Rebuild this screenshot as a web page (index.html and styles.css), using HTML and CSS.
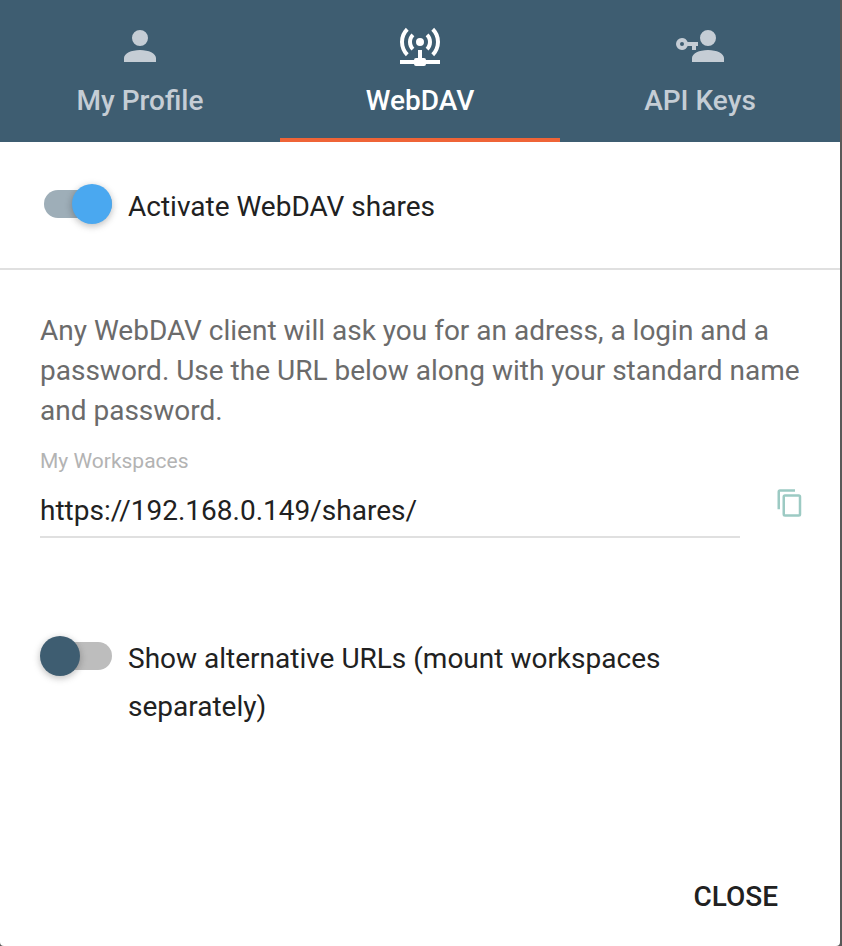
FILE: index.html
```html
<!DOCTYPE html>
<html lang="en">
<head>
<meta charset="utf-8">
<title>WebDAV</title>
<link rel="stylesheet" href="styles.css">
</head>
<body>
<main class="dialog">
  <nav class="tabs">
    <a class="tab">
      <svg class="tab-icon" viewBox="0 0 24 24"><path d="M12 4a4 4 0 1 1 0 8a4 4 0 0 1 0-8M12 14c4.420 0 8 1.790 8 4v2H4v-2c0-2.210 3.580-4 8-4z"/></svg>
      <span>My Profile</span>
    </a>
    <a class="tab active">
      <svg class="tab-icon" viewBox="0 0 24 24"><path d="M4.930 2.930C3.120 4.740 2 7.240 2 10c0 2.760 1.120 5.260 2.930 7.070l1.410-1.410C4.890 14.220 4 12.220 4 10c0-2.210.890-4.220 2.340-5.660zM19.070 2.930l-1.410 1.410C19.110 5.780 20 7.790 20 10c0 2.220-.890 4.220-2.340 5.660l1.410 1.410C20.880 15.260 22 12.760 22 10c0-2.760-1.120-5.260-2.930-7.070M7.760 5.760C6.670 6.850 6 8.350 6 10c0 1.650.670 3.150 1.760 4.240l1.410-1.410C8.450 12.110 8 11.110 8 10c0-1.110.450-2.110 1.170-2.830zM16.240 5.760l-1.410 1.410C15.550 7.890 16 8.890 16 10c0 1.110-.450 2.110-1.170 2.830l1.410 1.410C17.330 13.150 18 11.650 18 10c0-1.650-.670-3.150-1.760-4.240M12 8a2 2 0 1 0 0 4a2 2 0 0 0 0-4M11 14v4h-1a1 1 0 0 0-1 1H2v2h7a1 1 0 0 0 1 1h4a1 1 0 0 0 1-1h7v-2h-7a1 1 0 0 0-1-1h-1v-4z"/></svg>
      <span>WebDAV</span>
    </a>
    <a class="tab">
      <svg class="tab-icon" viewBox="0 0 24 24"><path d="M11 10v2h-1v2H8v-2H5.830C5.420 13.170 4.310 14 3 14a3 3 0 0 1 0-6c1.310 0 2.420.830 2.830 2zM3 10a1 1 0 1 0 0 2a1 1 0 0 0 0-2M16 14c4.420 0 8 1.790 8 4v2H8v-2c0-2.210 3.580-4 8-4M16 4a4 4 0 1 1 0 8a4 4 0 0 1 0-8z"/></svg>
      <span>API Keys</span>
    </a>
  </nav>

  <section class="activate">
    <span class="switch on"><span class="thumb"></span></span>
    <span class="switch-label">Activate WebDAV shares</span>
  </section>

  <section class="details">
    <p class="hint">Any WebDAV client will ask you for an adress, a login and a password. Use the URL below along with your standard name and password.</p>
    <div class="address">
      <div class="field">
        <span class="field-label">My Workspaces</span>
        <span class="field-value">https://192.168.0.149/shares/</span>
      </div>
      <svg class="copy" viewBox="0 0 24 24"><path d="M19 21H8V7h11m0-2H8a2 2 0 0 0-2 2v14a2 2 0 0 0 2 2h11a2 2 0 0 0 2-2V7a2 2 0 0 0-2-2m-3-4H4a2 2 0 0 0-2 2v14h2V3h12z"/></svg>
    </div>
    <div class="alternative">
      <span class="switch"><span class="thumb"></span></span>
      <span class="switch-label">Show alternative URLs (mount workspaces separately)</span>
    </div>
  </section>

  <footer class="actions"><button class="close">CLOSE</button></footer>
</main>
</body>
</html>
```

FILE: styles.css
```css
* { box-sizing: border-box; }
body {
  margin: 0;
  background: #595959;
  font-family: Roboto, sans-serif;
  font-size: 28px;
  color: #212121;
}
.dialog {
  display: flex;
  flex-direction: column;
  width: 840px;
  height: 946px;
  background: #fff;
  border-radius: 0 0 4px 4px;
  overflow: hidden;
}
.tabs {
  display: grid;
  grid-template-columns: repeat(3, 1fr);
  height: 142px;
  background: #3e5d71;
}
.tab {
  display: flex;
  flex-direction: column;
  align-items: center;
  padding-top: 22px;
  border-bottom: 4px solid transparent;
  color: #c5cdd5;
  font-weight: 500;
  line-height: 32px;
}
.tab.active { color: #fff; border-bottom-color: #ef6437; }
.tab-icon { width: 48px; height: 48px; margin-bottom: 15px; fill: currentColor; }
.activate {
  display: flex;
  height: 128px;
  padding: 40px 40px 0;
  border-bottom: 2px solid #e0e0e0;
}
.switch {
  flex: none;
  display: flex;
  align-items: center;
  width: 68px;
  height: 28px;
  margin: 8px 16px 0 4px;
  border-radius: 14px;
  background: #bdbdbd;
}
.thumb {
  flex: none;
  width: 40px;
  height: 40px;
  margin-left: -4px;
  border-radius: 50%;
  background: #3e5d71;
  box-shadow: 0 2px 8px rgba(0, 0, 0, .16), 0 2px 6px rgba(0, 0, 0, .12);
}
.switch.on { background: #9eaeb8; }
.switch.on .thumb { margin-left: 28px; background: #4aa8f0; }
.switch-label { margin-top: 1px; line-height: 48px; }
.details { padding: 41px 40px 0; }
.hint { margin: 0; line-height: 40px; color: #6b6b6b; }
.address { display: flex; align-items: flex-start; }
.field {
  flex: none;
  display: flex;
  flex-direction: column;
  width: 700px;
  height: 107px;
  padding-top: 17px;
  border-bottom: 2px solid #e0e0e0;
}
.field-label { font-size: 21px; line-height: 26px; color: #b3b3b3; }
.field-value { margin-top: 20px; line-height: 34px; }
.copy { flex: none; width: 30px; height: 30px; margin: 57px 0 0 35px; fill: #9ccac3; }
.alternative { display: flex; margin-top: 96px; }
.actions { display: flex; justify-content: flex-end; margin-top: auto; padding: 0 62px 31px 0; }
.close {
  padding: 0;
  border: 0;
  background: none;
  color: #212121;
  font: 500 28px/36px Roboto, sans-serif;
}
```
